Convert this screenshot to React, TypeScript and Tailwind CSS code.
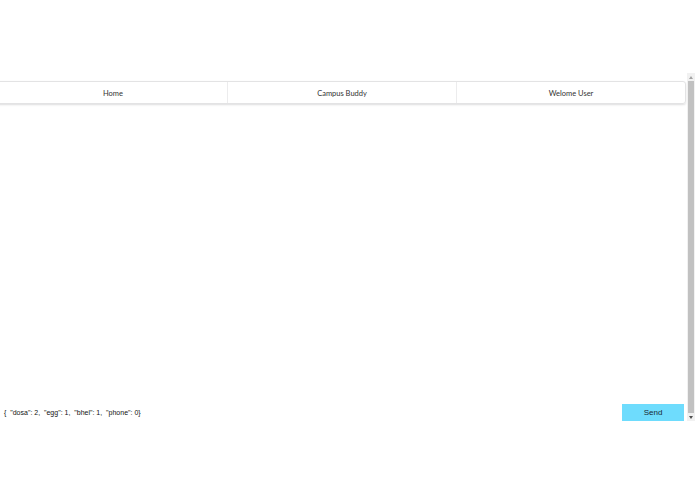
export default function App() {
  const items = ["Home", "Campus Buddy", "Welome User"];
  return (
    <div className="w-[695px] h-[494px] bg-white overflow-hidden">
      <div className="h-[73px]" />
      <div className="flex h-[348px]">
        <div className="flex-1 flex flex-col">
          <div className="mt-[8px] -ml-[2px] mr-[1px] flex h-[23px] border border-[#e3e3e4] rounded-r-[3px] shadow-[0_1px_2px_rgba(34,36,38,0.15)] font-['Lato','Noto_Sans',sans-serif] text-[7.5px] text-[#333]">
            {items.map((t, i) => (
              <div
                key={t}
                className={`flex-1 flex items-center justify-center pt-[2px] ${i > 0 ? "border-l border-[#ececed]" : ""}`}
              >
                {t}
              </div>
            ))}
          </div>
          <div className="flex-1" />
          <div className="flex items-end justify-between font-['Liberation_Sans',Arial,sans-serif] text-[7px] text-[#111]">
            <span className="ml-[4px] mb-[3px] whitespace-pre">{`{  "dosa": 2,  "egg": 1,  "bhel": 1,  "phone": 0}`}</span>
            <button className="w-[62px] h-[17px] mr-[3px] bg-[#6edcfd] text-[#1a2a33] text-[8px]">
              Send
            </button>
          </div>
        </div>
        <div className="w-[8px] flex flex-col bg-[#f1f1f1]">
          <div className="h-[8px] flex items-center justify-center">
            <div className="w-0 h-0 border-l-[2.5px] border-r-[2.5px] border-b-[3px] border-l-transparent border-r-transparent border-b-[#a3a3a3]" />
          </div>
          <div className="flex-1 mx-[1px] bg-[#c1c1c1]" />
          <div className="h-[8px] flex items-center justify-center">
            <div className="w-0 h-0 border-l-[2.5px] border-r-[2.5px] border-t-[3px] border-l-transparent border-r-transparent border-t-[#505050]" />
          </div>
        </div>
      </div>
    </div>
  );
}
